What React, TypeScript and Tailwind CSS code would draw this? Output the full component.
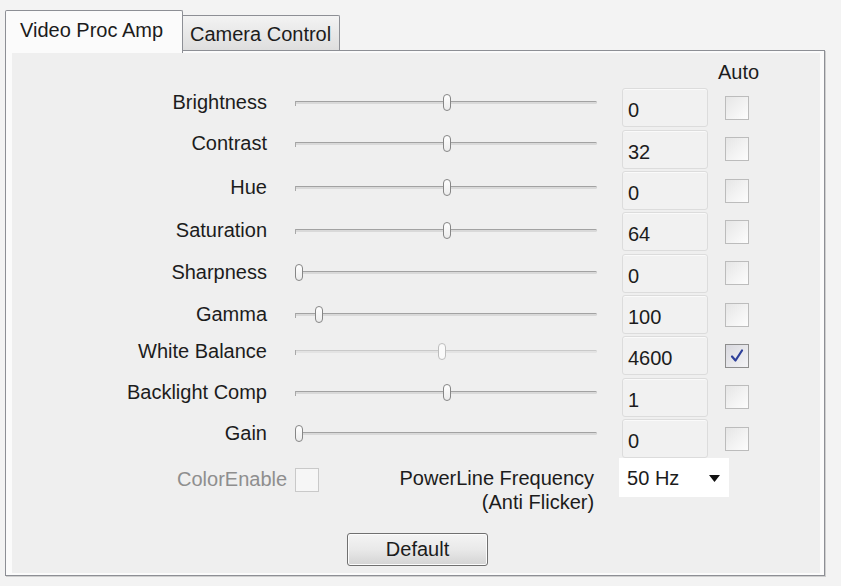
import React from 'react'

// one row per Video Proc Amp property
const rows = [
  { label: 'Brightness', value: '0', thumb: 'left-[148px]', h: 'h-[41px]', lift: 'pb-[10px]' },
  { label: 'Contrast', value: '32', thumb: 'left-[148px]', h: 'h-[42px]', lift: 'pb-[12px]' },
  { label: 'Hue', value: '0', thumb: 'left-[148px]', h: 'h-[41px]', lift: 'pb-[7px]' },
  { label: 'Saturation', value: '64', thumb: 'left-[148px]', h: 'h-[41px]', lift: 'pb-[3px]' },
  { label: 'Sharpness', value: '0', thumb: 'left-0', h: 'h-[42px]', lift: 'pb-[1px]' },
  { label: 'Gamma', value: '100', thumb: 'left-[20px]', h: 'h-[41px]', lift: 'pb-0' },
  { label: 'White Balance', value: '4600', thumb: 'left-[143px]', h: 'h-[41px]', lift: 'pb-[9px]', auto: true },
  { label: 'Backlight Comp', value: '1', thumb: 'left-[148px]', h: 'h-[42px]', lift: 'pb-[10px]' },
  { label: 'Gain', value: '0', thumb: 'left-0', h: 'h-[41px]', lift: 'pb-[11px]' },
]

function Slider({ thumb, disabled }: { thumb: string; disabled?: boolean }) {
  return (
    <div className="relative w-[302px] h-[17px] flex items-center">
      <div
        className={
          disabled
            ? 'w-full h-[3px] border-t border-[#c9c9c9] bg-[#e3e3e3] rounded-r-sm'
            : 'w-full h-[3px] border-t border-[#a2a2a2] bg-[#d9d9d9] rounded-r-sm'
        }
      />
      <div className="absolute left-0 top-[7px] w-px h-[5px] bg-[#a8a8a8]" />
      <div
        className={
          disabled
            ? `absolute top-0 ${thumb} w-[8px] h-[17px] rounded-[4px] border border-[#bdbdbd] bg-[#fafafa]`
            : `absolute top-0 ${thumb} w-[8px] h-[17px] rounded-[4px] border border-[#868686] bg-gradient-to-b from-white to-[#ececec]`
        }
      />
    </div>
  )
}

function Check({ checked, className = '' }: { checked?: boolean; className?: string }) {
  return (
    <div
      className={
        checked
          ? `w-[24px] h-[24px] border border-[#8e8e8e] bg-gradient-to-br from-[#d9d9df] to-[#f4f4f6] flex items-center justify-center ${className}`
          : `w-[24px] h-[24px] border border-[#bcbcbc] bg-gradient-to-br from-[#e6e6e6] to-[#fdfdfd] ${className}`
      }
    >
      {checked && (
        <svg width="16" height="16" viewBox="0 0 16 16">
          <path d="M3 8.5 L6.5 12.5 L13 2.5" fill="none" stroke="#2d3f9a" strokeWidth="2.2" strokeLinecap="round" strokeLinejoin="round" />
        </svg>
      )}
    </div>
  )
}

export default function App() {
  return (
    <div className="w-[841px] h-[586px] overflow-hidden bg-[#f3f3f3] pt-[10px] pl-[5px] font-['Liberation_Sans',Arial,sans-serif] text-[20px] leading-[23px] text-[#1c1c1c]">
      {/* tabs */}
      <div className="relative z-10 flex items-end h-[40px]">
        <div className="h-[43px] -mb-[3px] w-[178px] border border-b-0 border-[#8d8f95] rounded-t-[2px] bg-[#fbfbfb] pl-[14px] pt-[8px]">
          Video Proc Amp
        </div>
        <div className="h-[35px] w-[157px] border border-l-0 border-b-0 border-[#8d8f95] rounded-tr-[2px] bg-gradient-to-b from-[#f3f3f3] to-[#dedede] pl-[7px] pt-[7px]">
          Camera Control
        </div>
      </div>

      {/* panel */}
      <div className="w-[820px] h-[526px] border border-[#8d8f95] shadow-[1px_1px_0_#cfcfcf] bg-[#fbfbfb] pl-[6px] pt-[2px] pr-[4px] pb-[2px]">
        <div className="h-full bg-[#efefef] flex flex-col">
          <div className="h-[34px] flex items-end pb-[3px] pl-[706px]">Auto</div>

          {rows.map((r) => (
            <div key={r.label} className={`flex items-center ${r.h}`}>
              <div className={`flex items-center self-stretch ${r.lift}`}>
                <span className="w-[255px] text-right whitespace-nowrap">{r.label}</span>
                <div className="ml-[28px]">
                  <Slider thumb={r.thumb} disabled={r.auto} />
                </div>
              </div>
              <div className="ml-[25px] w-[86px] h-[39px] rounded-[3px] border border-[#dcdcdc] bg-[#f1f1f1] shadow-[inset_0_1px_0_#fafafa] pl-[5px] pt-[10px]">
                {r.value}
              </div>
              <Check checked={r.auto} className="ml-[17px]" />
            </div>
          ))}

          {/* ColorEnable / PowerLine */}
          <div className="h-[75px] flex items-start -mt-px">
            <span className="ml-[165px] mt-[10px] text-[#8e8e8e]">ColorEnable</span>
            <div className="ml-[8px] mt-[10px] w-[24px] h-[24px] border border-[#c9c9c9] bg-[#f6f6f6]" />
            <div className="ml-[0px] mt-[8px] w-[275px] text-right leading-[24px]">
              PowerLine Frequency
              <br />
              (Anti Flicker)
            </div>
            <div className="ml-[25px] w-[110px] h-[39px] bg-white flex items-center justify-between pl-[8px] pr-[9px] pt-[2px]">
              <span>50 Hz</span>
              <svg width="11" height="7" viewBox="0 0 11 7">
                <path d="M0 0 H11 L5.5 7 Z" fill="#111" />
              </svg>
            </div>
          </div>

          <button className="ml-[335px] w-[141px] h-[33px] rounded-[3px] border border-[#707070] bg-gradient-to-b from-[#f4f4f4] via-[#e9e9e9] to-[#d4d4d4] shadow-[inset_0_0_0_1px_#fcfcfc] text-[20px] leading-[23px] text-[#1c1c1c]">
            Default
          </button>
        </div>
      </div>
    </div>
  )
}
